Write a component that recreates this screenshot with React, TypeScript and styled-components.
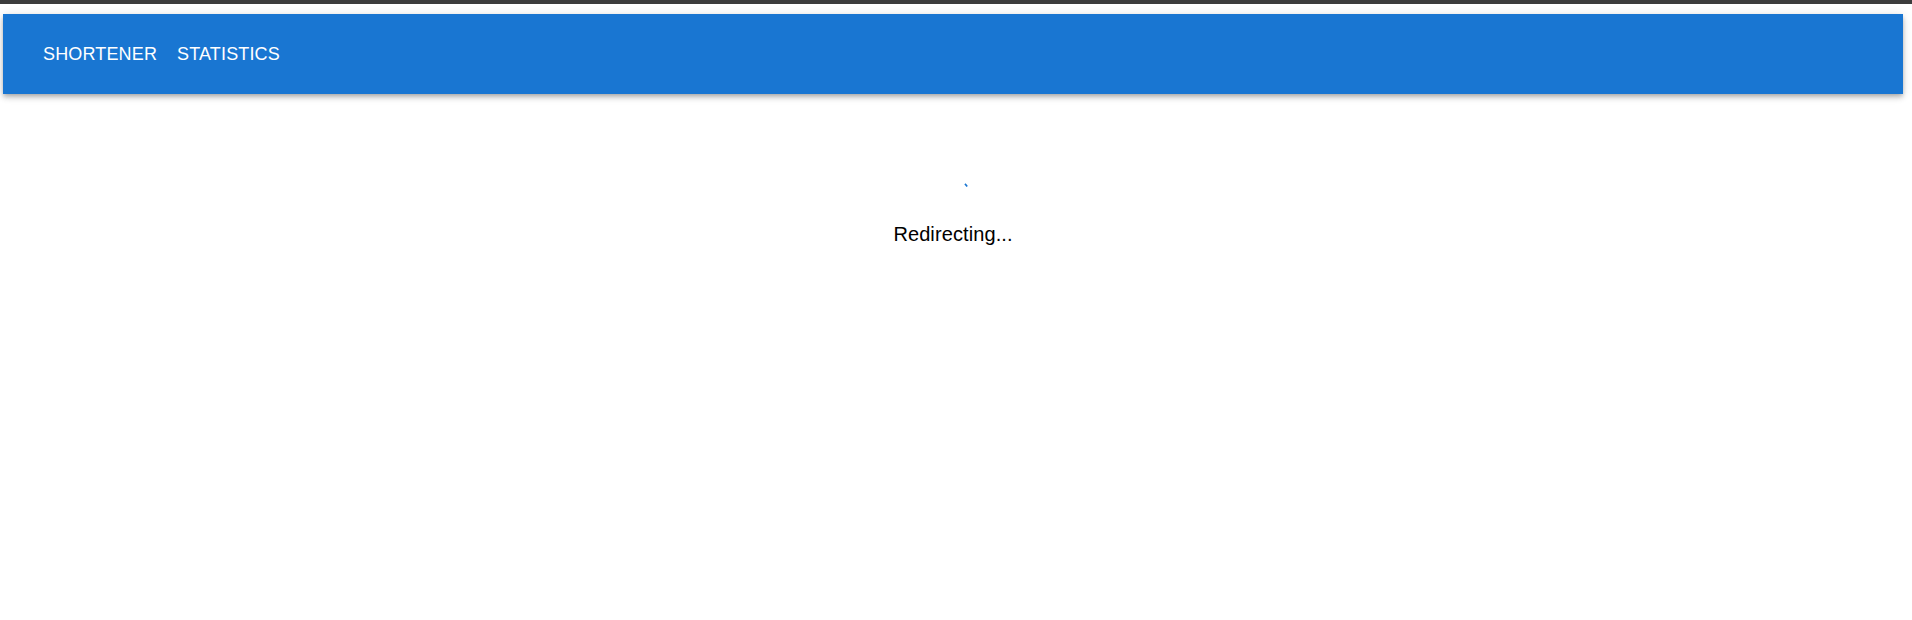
import styled, { createGlobalStyle } from "styled-components";

const GlobalStyle = createGlobalStyle`
  html, body {
    margin: 0;
    padding: 0;
    background: #ffffff;
    font-family: "Liberation Sans", Arial, sans-serif;
  }
`;

export default function App() {
  return (
    <>
      <GlobalStyle />
      <TopStrip />
      <Frame>
        <AppBar>
          <Toolbar>
            <NavButton>Shortener</NavButton>
            <NavButton>Statistics</NavButton>
          </Toolbar>
        </AppBar>
        <Main>
          <Spinner viewBox="0 0 40 40">
            {/* first frame of the indeterminate arc: only a short dash is visible */}
            <path
              d="M 31.9 5.9 A 18.36 18.36 0 0 1 34.2 8.4"
              fill="none"
              stroke="#1976d2"
              strokeWidth="1.6"
              strokeLinecap="butt"
            />
          </Spinner>
          <Message>Redirecting...</Message>
        </Main>
      </Frame>
    </>
  );
}

const TopStrip = styled.div`
  height: 4px;
  background: #3c3c3c;
`;

const Frame = styled.div`
  padding: 10px 9px 0 3px;
`;

const AppBar = styled.header`
  height: 80px;
  background: #1976d2;
  box-shadow: 0 2px 4px -1px rgba(0, 0, 0, 0.2), 0 4px 5px 0 rgba(0, 0, 0, 0.14),
    0 1px 10px 0 rgba(0, 0, 0, 0.12);
  display: flex;
  align-items: center;
`;

const Toolbar = styled.nav`
  display: flex;
  align-items: center;
  gap: 20px;
  padding-left: 40px;
`;

const NavButton = styled.button`
  border: none;
  background: transparent;
  padding: 0;
  color: #ffffff;
  font-family: "Liberation Sans", Arial, sans-serif;
  font-size: 18px;
  line-height: 24px;
  letter-spacing: 0.15px;
  text-transform: uppercase;
  cursor: pointer;
`;

const Main = styled.main`
  display: flex;
  flex-direction: column;
  align-items: center;
  padding-top: 84px;
`;

const Spinner = styled.svg`
  width: 40px;
  height: 40px;
  display: block;
`;

const Message = styled.p`
  margin: 5px 0 0;
  font-size: 20px;
  line-height: 23px;
  letter-spacing: 0.1px;
  color: #000000;
`;
